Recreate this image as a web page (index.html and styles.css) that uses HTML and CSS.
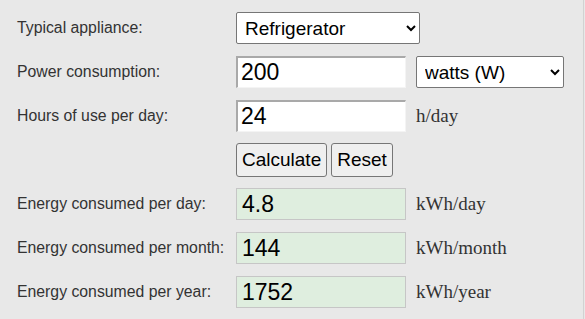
FILE: index.html
```html
<!DOCTYPE html>
<html>
<head>
<meta charset="utf-8">
<link rel="stylesheet" href="styles.css">
</head>
<body>
<div class="page">
  <form class="calc">
    <label class="lbl">Typical appliance:</label>
    <div class="ctl">
      <select class="sel sel-appliance">
        <option>Refrigerator</option>
      </select>
    </div>
    <div class="unit"></div>

    <label class="lbl">Power consumption:</label>
    <div class="ctl"><input class="inp" type="text" value="200"></div>
    <div class="unit">
      <select class="sel sel-unit">
        <option>watts (W)</option>
      </select>
    </div>

    <label class="lbl">Hours of use per day:</label>
    <div class="ctl"><input class="inp" type="text" value="24"></div>
    <div class="unit">h/day</div>

    <div class="lbl"></div>
    <div class="ctl btns">
      <button type="button" class="btn">Calculate</button>
      <button type="reset" class="btn">Reset</button>
    </div>
    <div class="unit"></div>

    <label class="lbl">Energy consumed per day:</label>
    <div class="ctl"><div class="out">4.8</div></div>
    <div class="unit">kWh/day</div>

    <label class="lbl">Energy consumed per month:</label>
    <div class="ctl"><div class="out">144</div></div>
    <div class="unit">kWh/month</div>

    <label class="lbl">Energy consumed per year:</label>
    <div class="ctl"><div class="out">1752</div></div>
    <div class="unit">kWh/year</div>
  </form>
</div>
</body>
</html>
```

FILE: styles.css
```css
html, body {
  margin: 0;
  padding: 0;
  background: #e8e8e8;
}

.page {
  width: 583px;
  height: 319px;
  border-right: 1px solid #d2d2d2;
}

.calc {
  display: grid;
  grid-template-columns: 219px 180px auto;
  grid-auto-rows: 44px;
  align-items: center;
  padding: 6px 0 0 17px;
  margin: 0;
}

.lbl {
  font-family: "Liberation Sans", Arial, sans-serif;
  font-size: 15.8px;
  color: #333;
}

.unit {
  font-family: "Liberation Serif", "Times New Roman", serif;
  font-size: 19px;
  color: #333;
}

.sel {
  font-family: "Liberation Sans", Arial, sans-serif;
  font-size: 19px;
  color: #000;
  background: #fff;
  border: 1px solid #767676;
  border-radius: 2px;
  height: 32px;
  padding: 0 3px 0 4px;
  margin: 0;
}

.sel-appliance {
  width: 184px;
}

.sel-unit {
  width: 148px;
}

.inp {
  box-sizing: border-box;
  width: 170px;
  height: 32px;
  margin: 0;
  padding: 0 3px;
  font-family: "Liberation Sans", Arial, sans-serif;
  font-size: 23px;
  color: #000;
  background: #fff;
  border-style: solid;
  border-width: 2px 1px 1px 2px;
  border-color: #a9a9a9 #f4f4f4 #f4f4f4 #a9a9a9;
  outline: none;
}

.btns {
  display: flex;
  gap: 4px;
}

.btn {
  height: 34px;
  margin: 0;
  padding: 0 5px;
  font-family: "Liberation Sans", Arial, sans-serif;
  font-size: 19px;
  color: #000;
  background: #efefef;
  border: 1px solid #767676;
  border-radius: 3px;
}

.out {
  box-sizing: border-box;
  width: 170px;
  height: 32px;
  line-height: 30px;
  padding: 0 5px;
  font-family: "Liberation Sans", Arial, sans-serif;
  font-size: 23px;
  color: #000;
  background: #dfeedf;
  border: 1px solid #c6c6c6;
}
```
